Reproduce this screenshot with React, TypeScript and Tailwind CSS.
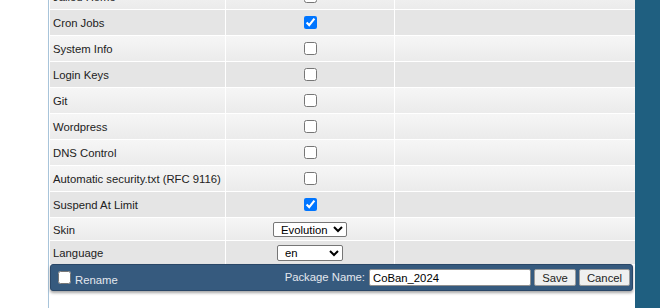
import React, { useState } from 'react';

type Row = { label: string; checked: boolean; dark: boolean };

const rows: Row[] = [
  { label: 'Jailed Home', checked: false, dark: false },
  { label: 'Cron Jobs', checked: true, dark: true },
  { label: 'System Info', checked: false, dark: false },
  { label: 'Login Keys', checked: false, dark: true },
  { label: 'Git', checked: false, dark: false },
  { label: 'Wordpress', checked: false, dark: false },
  { label: 'DNS Control', checked: false, dark: false },
  { label: 'Automatic security.txt (RFC 9116)', checked: false, dark: false },
  { label: 'Suspend At Limit', checked: true, dark: true },
];

const lightRow = 'bg-gradient-to-b from-[#f6f6f6] to-[#ebebeb]';
const darkRow = 'bg-[#e5e5e5]';

const App: React.FC = () => {
  const [values, setValues] = useState(rows.map((r) => r.checked));
  const [skin, setSkin] = useState('evolution');
  const [lang, setLang] = useState('en');
  const [name, setName] = useState('CoBan_2024');
  const [rename, setRename] = useState(false);

  const toggle = (i: number) => {
    const next = [...values];
    next[i] = !next[i];
    setValues(next);
  };

  return (
    <div className="flex h-[308px] w-[660px] overflow-hidden bg-white font-['Liberation_Sans',Arial,sans-serif] text-[11.3px] text-[#222]">
      {/* left gutter */}
      <div className="w-[48px] shrink-0 bg-white" />

      {/* main panel */}
      <div className="flex w-[587px] shrink-0 flex-col border-l border-[#a8c4da] bg-white pl-px shadow-[2px_0_3px_rgba(0,0,0,0.12)]">
        <div className="-mt-[16px] flex flex-col gap-px bg-white">
          {rows.map((row, i) => (
            <div key={row.label} className="grid h-[25px] grid-cols-[175px_168px_240px] gap-px">
              <div className={`flex items-center pl-[3px] pt-[2px] ${row.dark ? darkRow : lightRow}`}>{row.label}</div>
              <div className={`flex items-center justify-center ${row.dark ? darkRow : lightRow}`}>
                <input type="checkbox" checked={values[i]} onChange={() => toggle(i)} className="h-[13px] w-[13px]" />
              </div>
              <div className={row.dark ? darkRow : lightRow} />
            </div>
          ))}

          <div className="grid h-[22px] grid-cols-[175px_168px_240px] gap-px">
            <div className={`flex items-center pl-[3px] pt-[2px] ${lightRow}`}>Skin</div>
            <div className={`flex items-center justify-center ${lightRow}`}>
              <select
                value={skin}
                onChange={(e) => setSkin(e.target.value)}
                className="h-[15px] w-[74px] rounded-[2px] border border-[#767676] bg-white pl-[3px] text-[11.3px] text-black"
              >
                <option value="evolution">Evolution</option>
                <option value="enhanced">Enhanced</option>
              </select>
            </div>
            <div className={lightRow} />
          </div>

          <div className="grid h-[23px] grid-cols-[175px_168px_240px] gap-px">
            <div className={`flex items-center pl-[3px] pt-[2px] ${darkRow}`}>Language</div>
            <div className={`flex items-center justify-center ${darkRow}`}>
              <select
                value={lang}
                onChange={(e) => setLang(e.target.value)}
                className="h-[16px] w-[66px] rounded-[2px] border border-[#767676] bg-white pl-[3px] text-[11.3px] text-black"
              >
                <option value="en">en</option>
                <option value="vi">vi</option>
              </select>
            </div>
            <div className={darkRow} />
          </div>
        </div>

        {/* action bar */}
        <div className="mr-[2px] flex h-[27px] items-center rounded-[3px] border border-[#2a4767] bg-[#365a7e] pl-[7px] pr-[2px] text-[#e4e8ee] shadow-[0_2px_3px_rgba(0,0,0,0.35)]">
          <label className="flex items-center gap-[4px]">
            <input type="checkbox" checked={rename} onChange={() => setRename(!rename)} className="h-[13px] w-[13px]" />
            <span className="mt-[5px]">Rename</span>
          </label>
          <div className="ml-auto flex items-center">
            <span className="mr-[4px]">Package Name:</span>
            <input
              type="text"
              value={name}
              onChange={(e) => setName(e.target.value)}
              className="h-[17px] w-[162px] rounded-[2px] border border-[#8f8f8f] bg-white px-[3px] text-[11.3px] text-black outline-none"
            />
            <button className="ml-[3px] h-[17px] w-[42px] rounded-[2px] border border-[#9a9a9a] bg-[#efefef] text-[11.3px] text-[#222]">
              Save
            </button>
            <button className="ml-[3px] h-[17px] w-[51px] rounded-[2px] border border-[#9a9a9a] bg-[#efefef] text-[11.3px] text-[#222]">
              Cancel
            </button>
          </div>
        </div>
      </div>

      {/* right rail */}
      <div className="flex-1 bg-[#1f5f80]" />
    </div>
  );
};

export default App;
